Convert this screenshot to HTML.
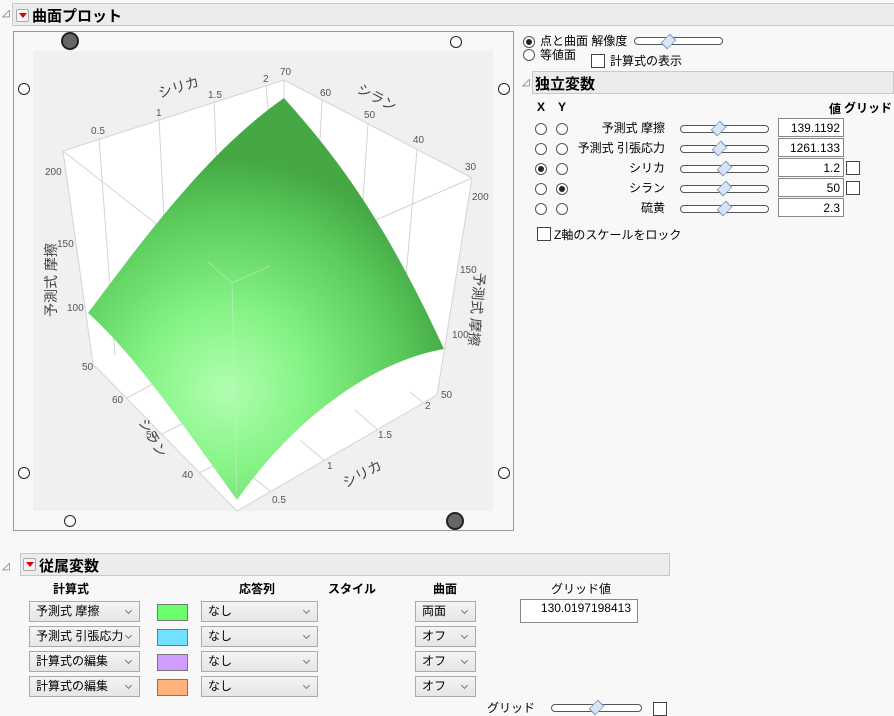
<!DOCTYPE html>
<html><head><meta charset="utf-8"><style>
body{margin:0;width:894px;height:716px;background:#f8f8f8;position:relative;overflow:hidden;font-family:"Liberation Sans","Noto Sans CJK JP",sans-serif;font-size:12px;color:#000}
.a{position:absolute}
.hdr{position:absolute;background:#ececec;border:1px solid #c8c8c8;height:21px}
.ht{position:absolute;font-weight:bold;font-size:15px}
.tri{position:absolute;font-size:10px;color:#666}
.dd{position:absolute;width:11px;height:11px;border:1px solid #aaa;background:#f4f4f4;border-radius:2px}
.dd:after{content:"";position:absolute;left:2px;top:3px;border-left:4px solid transparent;border-right:4px solid transparent;border-top:5px solid #d00}
.rad{position:absolute;width:10px;height:10px;border:1px solid #555;border-radius:50%;background:#fff}
.rad.on:after{content:"";position:absolute;left:2px;top:2px;width:6px;height:6px;border-radius:50%;background:#222}
.cb{position:absolute;width:12px;height:12px;border:1px solid #444;background:#fff}
.sl{position:absolute;height:6px;border:1px solid #555;border-radius:4px;background:#fff}
.kn{position:absolute;width:11px;height:11px;background:#d6e6f8;border:1px solid #7a95b8;transform:rotate(45deg) scaleX(.7)}
.box{position:absolute;background:#fff;border:1px solid #888;height:19px;text-align:right;padding-right:3px;box-sizing:border-box;line-height:18px;font-size:12px}
.sel{position:absolute;height:21px;border:1px solid #aaa;background:linear-gradient(#f4f4f4,#e6e6e6);box-sizing:border-box;line-height:19px;padding-left:6px;font-size:12px}
.sel:after{content:"";position:absolute;right:8px;top:6px;width:4px;height:4px;border-right:1px solid #777;border-bottom:1px solid #777;transform:rotate(45deg)}
.sw{position:absolute;width:31px;height:17px;border:1px solid #777;box-sizing:border-box}
.b{font-weight:bold}
.c{position:absolute;width:10px;height:10px;border:1px solid #222;border-radius:50%;background:#fff}
.big{position:absolute;width:14px;height:14px;border:2px solid #222;border-radius:50%;background:#666}
</style></head><body>
<div class="tri" style="left:2px;top:8px">◿</div>
<div class="hdr" style="left:12px;top:3px;width:881px"></div>
<div class="dd" style="left:16px;top:9px"></div>
<div class="ht" style="left:32px;top:5px">曲面プロット</div>

<div class="a" style="left:13px;top:31px;width:499px;height:498px;border:1px solid #999;background:#f8f8f8"></div>
<svg class="a" style="left:0;top:0" width="520" height="535">
<defs>
<radialGradient id="g" cx="225" cy="390" r="230" gradientUnits="userSpaceOnUse">
<stop offset="0" stop-color="#b0ffb0"/><stop offset="0.35" stop-color="#86f386"/><stop offset="0.75" stop-color="#5ccd5c"/><stop offset="1" stop-color="#45a845"/>
</radialGradient>
</defs>
<rect x="33" y="51" width="460" height="460" fill="#f0f0f0"/>
<polygon points="63,151 284,80 472,178 437,395 237,511 93,364" fill="#fff"/>
<g stroke="#d4d4d4" stroke-width="1" fill="none">
<polyline points="63,151 284,80 472,178"/>
<line x1="284" y1="80" x2="284" y2="100"/>
<line x1="63" y1="151" x2="93" y2="364"/><line x1="472" y1="178" x2="437" y2="395"/>
<line x1="93" y1="364" x2="237" y2="511"/><line x1="437" y1="395" x2="237" y2="511"/>
<line x1="99" y1="138" x2="115" y2="355"/><line x1="159" y1="118" x2="168" y2="300"/><line x1="214" y1="101" x2="220" y2="250"/><line x1="266" y1="85" x2="268" y2="110"/>
<line x1="322" y1="100" x2="320" y2="140"/><line x1="368" y1="124" x2="362" y2="215"/><line x1="417" y1="150" x2="404" y2="300"/>
<line x1="63" y1="151" x2="232" y2="283"/><line x1="472" y1="178" x2="232" y2="283"/>
<line x1="127" y1="398" x2="160" y2="380"/><line x1="162" y1="434" x2="190" y2="420"/><line x1="199" y1="473" x2="215" y2="465"/>
<line x1="270" y1="491" x2="250" y2="475"/><line x1="325" y1="461" x2="300" y2="440"/><line x1="378" y1="430" x2="355" y2="410"/><line x1="425" y1="404" x2="410" y2="392"/>
</g>
<path d="M284,98 C330,150 380,210 444,349 C380,360 300,410 237,500 C180,420 130,350 88,313 C150,230 210,150 284,98 Z" fill="url(#g)"/>
<g stroke="#cfe9cf" stroke-width="0.8" fill="none" opacity=".7">
<line x1="232" y1="283" x2="237" y2="500"/><line x1="232" y1="283" x2="208" y2="262"/><line x1="232" y1="283" x2="270" y2="266"/>
</g>
<g font-family="Liberation Sans,sans-serif" font-size="10" fill="#555">
<text x="91" y="134">0.5</text><text x="156" y="116">1</text><text x="208" y="98">1.5</text><text x="263" y="82">2</text><text x="280" y="75">70</text>
<text x="320" y="96">60</text><text x="364" y="118">50</text><text x="413" y="143">40</text><text x="465" y="170">30</text>
<text x="45" y="175">200</text><text x="472" y="200">200</text><text x="57" y="247">150</text><text x="460" y="273">150</text>
<text x="67" y="311">100</text><text x="452" y="338">100</text><text x="82" y="370">50</text><text x="441" y="398">50</text>
<text x="112" y="403">60</text><text x="146" y="438">50</text><text x="182" y="478">40</text>
<text x="425" y="409">2</text><text x="378" y="438">1.5</text><text x="327" y="469">1</text><text x="272" y="503">0.5</text>
</g>
<g font-family="Liberation Sans,Noto Sans CJK JP,sans-serif" font-size="14" fill="#444">
<text transform="translate(160,98) rotate(-17)">シリカ</text>
<text transform="translate(356,92) rotate(28)">シラン</text>
<text transform="translate(346,488) rotate(-28)">シリカ</text>
<text transform="translate(138,422) rotate(60)">シラン</text>
<text transform="translate(56,317) rotate(-90)">予測式 摩擦</text>
<text transform="translate(475,272) rotate(95)">予測式 摩擦</text>
</g>
</svg>
<div class="big" style="left:61px;top:32px"></div>
<div class="c" style="left:450px;top:36px"></div>
<div class="c" style="left:18px;top:83px"></div><div class="c" style="left:498px;top:83px"></div>
<div class="c" style="left:18px;top:467px"></div><div class="c" style="left:498px;top:467px"></div>
<div class="c" style="left:64px;top:515px"></div>
<div class="big" style="left:446px;top:512px"></div>

<div class="rad on" style="left:523px;top:36px"></div><div class="a" style="left:540px;top:32px">点と曲面 解像度</div>
<div class="sl" style="left:634px;top:37px;width:87px"></div><div class="kn" style="left:662px;top:35px"></div>
<div class="rad" style="left:523px;top:49px"></div><div class="a" style="left:540px;top:46px">等値面</div>
<div class="cb" style="left:591px;top:54px"></div><div class="a" style="left:610px;top:52px">計算式の表示</div>

<div class="tri" style="left:522px;top:77px">◿</div>
<div class="hdr" style="left:532px;top:71px;width:360px"></div>
<div class="ht" style="left:535px;top:73px">独立変数</div>
<div class="a b" style="left:537px;top:100px">X</div><div class="a b" style="left:558px;top:100px">Y</div>
<div class="a b" style="left:829px;top:100px">値</div><div class="a b" style="left:844px;top:99px">グリッド</div>

<div class="rad" style="left:535px;top:123px"></div><div class="rad" style="left:556px;top:123px"></div>
<div class="a" style="left:560px;top:119px;width:105px;text-align:right">予測式 摩擦</div>
<div class="sl" style="left:680px;top:125px;width:87px"></div><div class="kn" style="left:712px;top:122px"></div>
<div class="box" style="left:778px;top:118px;width:66px">139.1192</div>

<div class="rad" style="left:535px;top:143px"></div><div class="rad" style="left:556px;top:143px"></div>
<div class="a" style="left:560px;top:139px;width:105px;text-align:right">予測式 引張応力</div>
<div class="sl" style="left:680px;top:145px;width:87px"></div><div class="kn" style="left:713px;top:142px"></div>
<div class="box" style="left:778px;top:138px;width:66px">1261.133</div>

<div class="rad on" style="left:535px;top:163px"></div><div class="rad" style="left:556px;top:163px"></div>
<div class="a" style="left:560px;top:159px;width:105px;text-align:right">シリカ</div>
<div class="sl" style="left:680px;top:165px;width:87px"></div><div class="kn" style="left:718px;top:162px"></div>
<div class="box" style="left:778px;top:158px;width:66px">1.2</div><div class="cb" style="left:846px;top:161px"></div>

<div class="rad" style="left:535px;top:183px"></div><div class="rad on" style="left:556px;top:183px"></div>
<div class="a" style="left:560px;top:179px;width:105px;text-align:right">シラン</div>
<div class="sl" style="left:680px;top:185px;width:87px"></div><div class="kn" style="left:718px;top:182px"></div>
<div class="box" style="left:778px;top:178px;width:66px">50</div><div class="cb" style="left:846px;top:181px"></div>

<div class="rad" style="left:535px;top:203px"></div><div class="rad" style="left:556px;top:203px"></div>
<div class="a" style="left:560px;top:199px;width:105px;text-align:right">硫黄</div>
<div class="sl" style="left:680px;top:205px;width:87px"></div><div class="kn" style="left:718px;top:202px"></div>
<div class="box" style="left:778px;top:198px;width:66px">2.3</div>
<div class="cb" style="left:537px;top:227px"></div><div class="a" style="left:554px;top:226px">Z軸のスケールをロック</div>

<div class="tri" style="left:2px;top:561px">◿</div>
<div class="hdr" style="left:20px;top:553px;width:648px"></div>
<div class="dd" style="left:23px;top:558px"></div>
<div class="ht" style="left:39px;top:555px">従属変数</div>
<div class="a b" style="left:53px;top:580px">計算式</div>
<div class="a b" style="left:239px;top:580px">応答列</div>
<div class="a b" style="left:328px;top:580px">スタイル</div>
<div class="a b" style="left:433px;top:580px">曲面</div>
<div class="a" style="left:551px;top:580px">グリッド値</div>

<div class="sel" style="left:29px;top:601px;width:111px">予測式 摩擦</div>
<div class="sw" style="left:157px;top:604px;background:#6bff6b"></div>
<div class="sel" style="left:201px;top:601px;width:117px">なし</div>
<div class="sel" style="left:415px;top:601px;width:61px">両面</div>
<div class="box" style="left:520px;top:599px;width:118px;height:24px;line-height:16px;padding-right:6px">130.0197198413</div>

<div class="sel" style="left:29px;top:626px;width:111px">予測式 引張応力</div>
<div class="sw" style="left:157px;top:629px;background:#72e1ff"></div>
<div class="sel" style="left:201px;top:626px;width:117px">なし</div>
<div class="sel" style="left:415px;top:626px;width:61px">オフ</div>

<div class="sel" style="left:29px;top:651px;width:111px">計算式の編集</div>
<div class="sw" style="left:157px;top:654px;background:#d09cff"></div>
<div class="sel" style="left:201px;top:651px;width:117px">なし</div>
<div class="sel" style="left:415px;top:651px;width:61px">オフ</div>

<div class="sel" style="left:29px;top:676px;width:111px">計算式の編集</div>
<div class="sw" style="left:157px;top:679px;background:#ffb27a"></div>
<div class="sel" style="left:201px;top:676px;width:117px">なし</div>
<div class="sel" style="left:415px;top:676px;width:61px">オフ</div>

<div class="a" style="left:487px;top:699px">グリッド</div>
<div class="sl" style="left:551px;top:704px;width:89px"></div><div class="kn" style="left:590px;top:701px"></div>
<div class="cb" style="left:653px;top:702px"></div>
</body></html>
